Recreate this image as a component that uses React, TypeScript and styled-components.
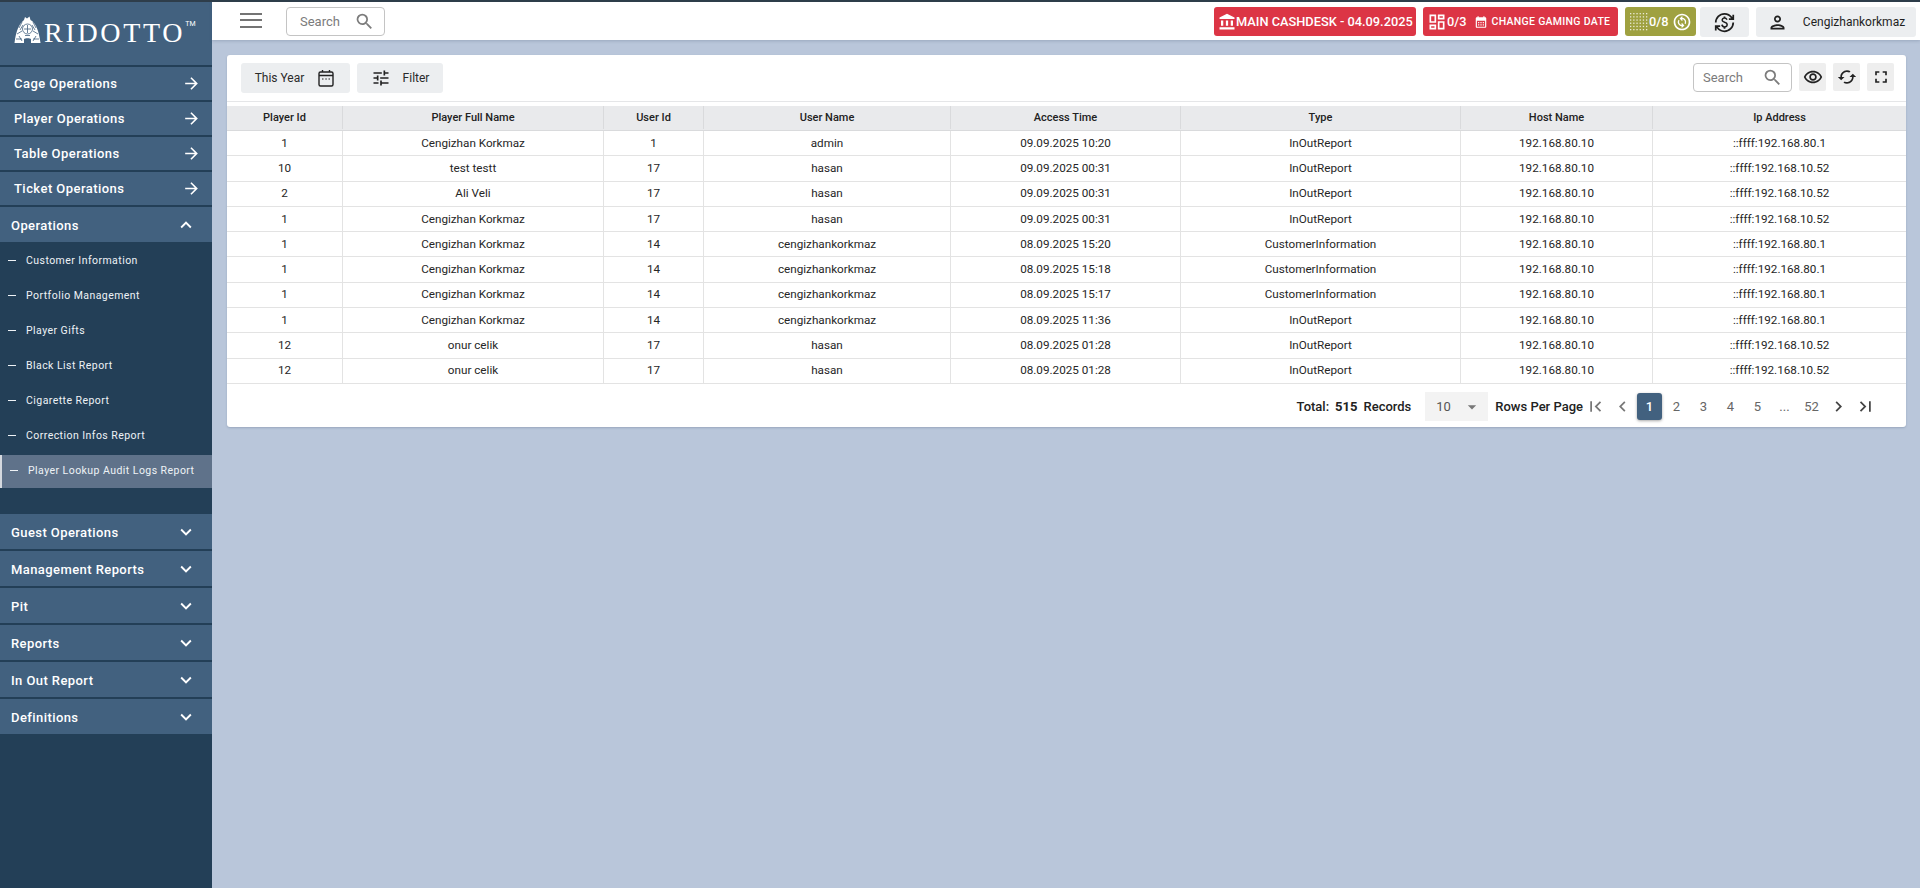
import React from 'react';
import styled, { createGlobalStyle } from 'styled-components';
import {
  MdAccountBalance,
  MdArrowDropDown,
  MdArrowForward,
  MdCalendarMonth,
  MdChevronLeft,
  MdChevronRight,
  MdFirstPage,
  MdKeyboardArrowDown,
  MdKeyboardArrowUp,
  MdLastPage,
  MdOutlineChangeCircle,
  MdOutlineCurrencyExchange,
  MdOutlineDashboard,
  MdOutlineFullscreen,
  MdOutlinePerson,
  MdOutlineRemoveRedEye,
  MdOutlineTune,
  MdSearch,
  MdSync,
} from 'react-icons/md';

const GlobalStyle = createGlobalStyle`
  html, body {
    margin: 0;
    padding: 0;
    height: 100%;
    overflow: hidden;
    background: #b9c6da;
    font-family: Roboto, "Liberation Sans", sans-serif;
  }
  * { box-sizing: border-box; }
`;

// Page frame
const Page = styled.div`
  display: flex;
  width: 1920px;
  height: 888px;
  border-top: 2px solid #2e3d4a;
  background: #b9c6da;
`;

const Sidebar = styled.aside`
  width: 212px;
  flex: none;
  display: flex;
  flex-direction: column;
  background: #233f57;
`;

const LogoBox = styled.div`
  height: 63px;
  margin-bottom: 2px;
  padding: 14px 0 0 14px;
  display: flex;
  align-items: flex-start;
  background: #42617f;
  color: #fff;
`;

const LogoText = styled.span`
  font-family: "Liberation Serif", serif;
  font-size: 28px;
  line-height: 29px;
  letter-spacing: 2.7px;
  margin: 2px 0 0 3px;
`;

const LogoMark = styled.span`
  font-family: Roboto, sans-serif;
  font-size: 7px;
  line-height: 8px;
  margin-top: 4px;
`;

const NavLink = styled.div`
  height: 33px;
  margin-bottom: 2px;
  padding: 0 11px 0 14px;
  display: flex;
  align-items: center;
  justify-content: space-between;
  background: #42617f;
  color: #fff;
  font-size: 13px;
  font-weight: 500;
  letter-spacing: 0.45px;
  svg { font-size: 19px; }
`;

const GroupHead = styled.div<{ $open?: boolean }>`
  height: 35px;
  margin-bottom: ${(p) => (p.$open ? '0' : '2px')};
  padding: 1px 15px 0 11px;
  display: flex;
  align-items: center;
  justify-content: space-between;
  background: #42617f;
  color: #fff;
  font-size: 13px;
  font-weight: 500;
  letter-spacing: 0.42px;
  svg { font-size: 22px; }
`;

const SubList = styled.div`
  display: flex;
  flex-direction: column;
  padding-bottom: 26px;
`;

const SubItem = styled.div<{ $active?: boolean }>`
  height: ${(p) => (p.$active ? '33px' : '35px')};
  margin-top: ${(p) => (p.$active ? '3px' : '0')};
  padding: ${(p) => (p.$active ? '0 0 2px 8px' : '2px 0 0 8px')};
  display: flex;
  align-items: center;
  gap: 10px;
  color: #eef2f6;
  font-size: 10.5px;
  letter-spacing: 0.45px;
  background: ${(p) => (p.$active ? '#5f728a' : 'transparent')};
  border-left: ${(p) => (p.$active ? '2px solid #d5d9df' : '0')};
`;

const SubDash = styled.span`
  width: 8px;
  height: 1.5px;
  flex: none;
  background: #eef2f6;
`;

const Main = styled.div`
  flex: 1;
  min-width: 0;
  display: flex;
  flex-direction: column;
`;

// Top bar
const TopBar = styled.header`
  height: 38px;
  padding: 5px 4px 0 28px;
  display: flex;
  align-items: flex-start;
  background: #fff;
  box-shadow: 0 1px 3px rgba(60, 80, 110, 0.25);
`;

const MenuButton = styled.div`
  width: 22px;
  height: 15px;
  margin: 6px 24px 0 0;
  border-top: 2.5px solid #747474;
  border-bottom: 2.5px solid #747474;
  position: relative;
  &::after {
    content: '';
    position: absolute;
    left: 0;
    right: 0;
    top: 3.5px;
    height: 2.5px;
    background: #747474;
  }
`;

const SearchBox = styled.div<{ $wide?: boolean }>`
  width: 99px;
  height: 29px;
  padding: ${(p) => (p.$wide ? '0 8px 0 9px' : '0 9px 0 13px')};
  display: flex;
  align-items: center;
  justify-content: space-between;
  border: 1px solid #c4c4c4;
  border-radius: 4px;
  background: #fff;
  color: #7b7b7b;
  font-size: 13px;
  svg { font-size: 21px; color: #7c7c7c; }
`;

const TopActions = styled.div`
  margin-left: auto;
  display: flex;
  align-items: flex-start;
  gap: 7px;
`;

const Badge = styled.div<{ $color: string; $width: number }>`
  width: ${(p) => p.$width}px;
  height: 29px;
  padding: 0 4px;
  display: flex;
  align-items: center;
  border-radius: 3px;
  background: ${(p) => p.$color};
  color: #fff;
  font-size: 12.8px;
  font-weight: 500;
  white-space: nowrap;
  svg { flex: none; }
`;

const BadgeSmall = styled.span`
  font-size: 10.5px;
  letter-spacing: 0.3px;
  margin-left: 4px;
`;

const GreyButton = styled.div<{ $width: number; $pull?: boolean }>`
  width: ${(p) => p.$width}px;
  height: 30px;
  margin-left: ${(p) => (p.$pull ? '-3px' : '0')};
  display: flex;
  align-items: center;
  justify-content: center;
  gap: 15px;
  border-radius: 3px;
  background: #eceef0;
  color: #1f1f1f;
  font-size: 12px;
  svg { font-size: 21px; }
`;

// Report card
const Content = styled.main`
  padding: 15px 14px 15px 15px;
`;

const Card = styled.section`
  height: 372px;
  display: flex;
  flex-direction: column;
  background: #fff;
  border-radius: 3px;
  box-shadow: 0 1px 2px rgba(60, 80, 110, 0.25);
`;

const Toolbar = styled.div`
  height: 47px;
  margin-bottom: 4px;
  padding: 8px 12px 0 14px;
  display: flex;
  align-items: flex-start;
  gap: 7px;
  border-bottom: 1px solid #e5e6e8;
`;

const ToolButton = styled.div<{ $width: number }>`
  width: ${(p) => p.$width}px;
  height: 30px;
  display: flex;
  align-items: center;
  justify-content: center;
  gap: 12px;
  border-radius: 3px;
  background: #eceef0;
  color: #2a2a2a;
  font-size: 12px;
  svg { font-size: 20px; color: #222; }
`;

const ToolRight = styled.div`
  margin-left: auto;
  display: flex;
  gap: 7px;
`;

const IconButton = styled.div`
  width: 27px;
  height: 28px;
  display: flex;
  align-items: center;
  justify-content: center;
  border-radius: 2px;
  background: #eeeeee;
  color: #222;
  svg { font-size: 20px; }
`;

const COLUMNS = '116px 261px 100px 247px 230px 280px 192px 1fr';

const HeadRow = styled.div`
  height: 25px;
  padding-bottom: 1px;
  display: grid;
  grid-template-columns: ${COLUMNS};
  background: #e9eaec;
  border-bottom: 1px solid #d9dadc;
`;

const HeadCell = styled.div`
  display: flex;
  align-items: center;
  justify-content: center;
  border-right: 1px solid #d9dadc;
  color: #222;
  font-size: 11px;
  font-weight: 500;
  &:last-child { border-right: 0; }
`;

const Row = styled.div`
  height: 25.3px;
  display: grid;
  grid-template-columns: ${COLUMNS};
  border-bottom: 1px solid #e3e3e3;
`;

const Cell = styled.div`
  padding-bottom: 1px;
  display: flex;
  align-items: center;
  justify-content: center;
  border-right: 1px solid #e3e3e3;
  color: #262626;
  font-size: 11.7px;
  &:last-child { border-right: 0; }
`;

// Pagination
const Footer = styled.div`
  flex: 1;
  padding: 8px 27px 0 0;
  display: flex;
  align-items: flex-start;
  justify-content: flex-end;
  color: #222;
  font-size: 13px;
`;

const Total = styled.div`
  height: 29px;
  display: flex;
  align-items: center;
  gap: 6px;
  font-weight: 500;
  b { font-weight: 700; }
`;

const RowsSelect = styled.div`
  width: 63px;
  height: 29px;
  margin: 0 7px 0 14px;
  padding: 1px 6px 0 11px;
  display: flex;
  align-items: center;
  justify-content: space-between;
  background: #f3f3f3;
  color: #555;
  font-size: 13px;
  svg { font-size: 20px; color: #777; }
`;

const RowsLabel = styled.div`
  height: 29px;
  margin-right: -1px;
  display: flex;
  align-items: center;
  font-weight: 500;
`;

const PageButton = styled.div<{ $active?: boolean }>`
  width: 25px;
  height: 27px;
  margin: 1px 1px 0;
  display: flex;
  align-items: center;
  justify-content: center;
  border-radius: 3px;
  background: ${(p) => (p.$active ? '#42617f' : 'transparent')};
  color: ${(p) => (p.$active ? '#fff' : '#666')};
  box-shadow: ${(p) => (p.$active ? '0 1px 3px rgba(0, 0, 0, 0.35)' : 'none')};
  font-size: 13px;
  font-weight: ${(p) => (p.$active ? 500 : 400)};
  svg { font-size: 21px; color: #777; }
`;

const DarkArrow = styled.span`
  display: flex;
  svg { color: #444; }
`;

const TurnedSync = styled(MdSync)`
  transform: rotate(90deg);
`;

// Drawn icons
const Emblem = () => (
  <svg width="27" height="27" viewBox="0 0 27 27" style={{ flex: 'none' }}>
    <path
      fill="#fff"
      d="M10 4 L11 1 L13 2.5 L15.5 0.5 L16.5 4 L18 5 C22 8 25 15 26.5 27 L17 27 L17 23 C16 22 11 22 10 23 L10 27 L0.5 27 C2 15 5 8 10 4 Z"
    />
    <g fill="none" stroke="#42617f" strokeWidth="0.8">
      <path d="M8 6 L5 12 M19 6 L22 12 M3 18 L8 15 M24 18 L19 15 M2 23 H8 M19 23 H25 M6 14 L9 9 M21 14 L18 9 M5 20 L8 25 M22 20 L19 25" />
      <circle cx="13.5" cy="13" r="5" />
      <path d="M10 13 H17 M13.5 9 V17 M11 19.5 H16" />
    </g>
  </svg>
);

const DotGrid = () => (
  <svg width="20" height="20" viewBox="0 0 20 20" fill="#fff" style={{ flex: 'none', opacity: 0.8 }}>
    {Array.from({ length: 36 }).map((_, i) => (
      <rect key={i} x={1 + (i % 6) * 3.2} y={1 + Math.floor(i / 6) * 3.2} width="1.3" height="1.3" />
    ))}
  </svg>
);

const CalendarIcon = () => (
  <svg width="20" height="20" viewBox="0 0 20 20" fill="none" stroke="#222">
    <rect x="3" y="4" width="14" height="14" rx="1.5" strokeWidth="1.4" />
    <path d="M3 7.5 H17 M6.5 2 V4 M13.5 2 V4" strokeWidth="1.4" />
    <path d="M6 11 H7.5 M9.3 11 H10.8 M12.5 11 H14" strokeWidth="1.2" />
  </svg>
);

const navLinks = ['Cage Operations', 'Player Operations', 'Table Operations', 'Ticket Operations'];
const subItems = [
  'Customer Information',
  'Portfolio Management',
  'Player Gifts',
  'Black List Report',
  'Cigarette Report',
  'Correction Infos Report',
];
const groups = ['Guest Operations', 'Management Reports', 'Pit', 'Reports', 'In Out Report', 'Definitions'];
const headers = ['Player Id', 'Player Full Name', 'User Id', 'User Name', 'Access Time', 'Type', 'Host Name', 'Ip Address'];

const CK = 'Cengizhan Korkmaz';
const rows = [
  ['1', CK, '1', 'admin', '09.09.2025 10:20', 'InOutReport', '::ffff:192.168.80.1'],
  ['10', 'test testt', '17', 'hasan', '09.09.2025 00:31', 'InOutReport', '::ffff:192.168.10.52'],
  ['2', 'Ali Veli', '17', 'hasan', '09.09.2025 00:31', 'InOutReport', '::ffff:192.168.10.52'],
  ['1', CK, '17', 'hasan', '09.09.2025 00:31', 'InOutReport', '::ffff:192.168.10.52'],
  ['1', CK, '14', 'cengizhankorkmaz', '08.09.2025 15:20', 'CustomerInformation', '::ffff:192.168.80.1'],
  ['1', CK, '14', 'cengizhankorkmaz', '08.09.2025 15:18', 'CustomerInformation', '::ffff:192.168.80.1'],
  ['1', CK, '14', 'cengizhankorkmaz', '08.09.2025 15:17', 'CustomerInformation', '::ffff:192.168.80.1'],
  ['1', CK, '14', 'cengizhankorkmaz', '08.09.2025 11:36', 'InOutReport', '::ffff:192.168.80.1'],
  ['12', 'onur celik', '17', 'hasan', '08.09.2025 01:28', 'InOutReport', '::ffff:192.168.10.52'],
  ['12', 'onur celik', '17', 'hasan', '08.09.2025 01:28', 'InOutReport', '::ffff:192.168.10.52'],
];

const App: React.FC = () => {
  return (
    <Page>
      <GlobalStyle />
      <Sidebar>
        <LogoBox>
          <Emblem />
          <LogoText>RIDOTTO</LogoText>
          <LogoMark>TM</LogoMark>
        </LogoBox>
        {navLinks.map((name) => (
          <NavLink key={name}>
            {name}
            <MdArrowForward />
          </NavLink>
        ))}
        <GroupHead $open>
          Operations
          <MdKeyboardArrowUp />
        </GroupHead>
        <SubList>
          {subItems.map((name) => (
            <SubItem key={name}>
              <SubDash />
              {name}
            </SubItem>
          ))}
          <SubItem $active>
            <SubDash />
            Player Lookup Audit Logs Report
          </SubItem>
        </SubList>
        {groups.map((name) => (
          <GroupHead key={name}>
            {name}
            <MdKeyboardArrowDown />
          </GroupHead>
        ))}
      </Sidebar>

      <Main>
        <TopBar>
          <MenuButton />
          <SearchBox>
            Search
            <MdSearch />
          </SearchBox>
          <TopActions>
            <Badge $color="#dc3545" $width={202}>
              <MdAccountBalance size={18} />
              MAIN CASHDESK - 04.09.2025
            </Badge>
            <Badge $color="#dc3545" $width={195}>
              <MdOutlineDashboard size={20} />
              0/3
              <MdCalendarMonth size={14} style={{ marginLeft: 7 }} />
              <BadgeSmall>CHANGE GAMING DATE</BadgeSmall>
            </Badge>
            <Badge $color="#9fa140" $width={71}>
              <DotGrid />
              0/8
              <MdOutlineChangeCircle size={20} style={{ marginLeft: 3 }} />
            </Badge>
            <GreyButton $width={49} $pull>
              <MdOutlineCurrencyExchange />
            </GreyButton>
            <GreyButton $width={160}>
              <MdOutlinePerson />
              Cengizhankorkmaz
            </GreyButton>
          </TopActions>
        </TopBar>

        <Content>
          <Card>
            <Toolbar>
              <ToolButton $width={109}>
                This Year
                <CalendarIcon />
              </ToolButton>
              <ToolButton $width={86}>
                <MdOutlineTune />
                Filter
              </ToolButton>
              <ToolRight>
                <SearchBox $wide>
                  Search
                  <MdSearch />
                </SearchBox>
                <IconButton>
                  <MdOutlineRemoveRedEye />
                </IconButton>
                <IconButton>
                  <TurnedSync />
                </IconButton>
                <IconButton>
                  <MdOutlineFullscreen />
                </IconButton>
              </ToolRight>
            </Toolbar>

            <HeadRow>
              {headers.map((h) => (
                <HeadCell key={h}>{h}</HeadCell>
              ))}
            </HeadRow>
            {rows.map((r, i) => (
              <Row key={i}>
                <Cell>{r[0]}</Cell>
                <Cell>{r[1]}</Cell>
                <Cell>{r[2]}</Cell>
                <Cell>{r[3]}</Cell>
                <Cell>{r[4]}</Cell>
                <Cell>{r[5]}</Cell>
                <Cell>192.168.80.10</Cell>
                <Cell>{r[6]}</Cell>
              </Row>
            ))}

            <Footer>
              <Total>
                Total:
                <b>515</b>
                Records
              </Total>
              <RowsSelect>
                10
                <MdArrowDropDown />
              </RowsSelect>
              <RowsLabel>Rows Per Page</RowsLabel>
              <PageButton>
                <MdFirstPage />
              </PageButton>
              <PageButton>
                <MdChevronLeft />
              </PageButton>
              <PageButton $active>1</PageButton>
              <PageButton>2</PageButton>
              <PageButton>3</PageButton>
              <PageButton>4</PageButton>
              <PageButton>5</PageButton>
              <PageButton>...</PageButton>
              <PageButton>52</PageButton>
              <PageButton>
                <DarkArrow>
                  <MdChevronRight />
                </DarkArrow>
              </PageButton>
              <PageButton>
                <DarkArrow>
                  <MdLastPage />
                </DarkArrow>
              </PageButton>
            </Footer>
          </Card>
        </Content>
      </Main>
    </Page>
  );
};

export default App;
